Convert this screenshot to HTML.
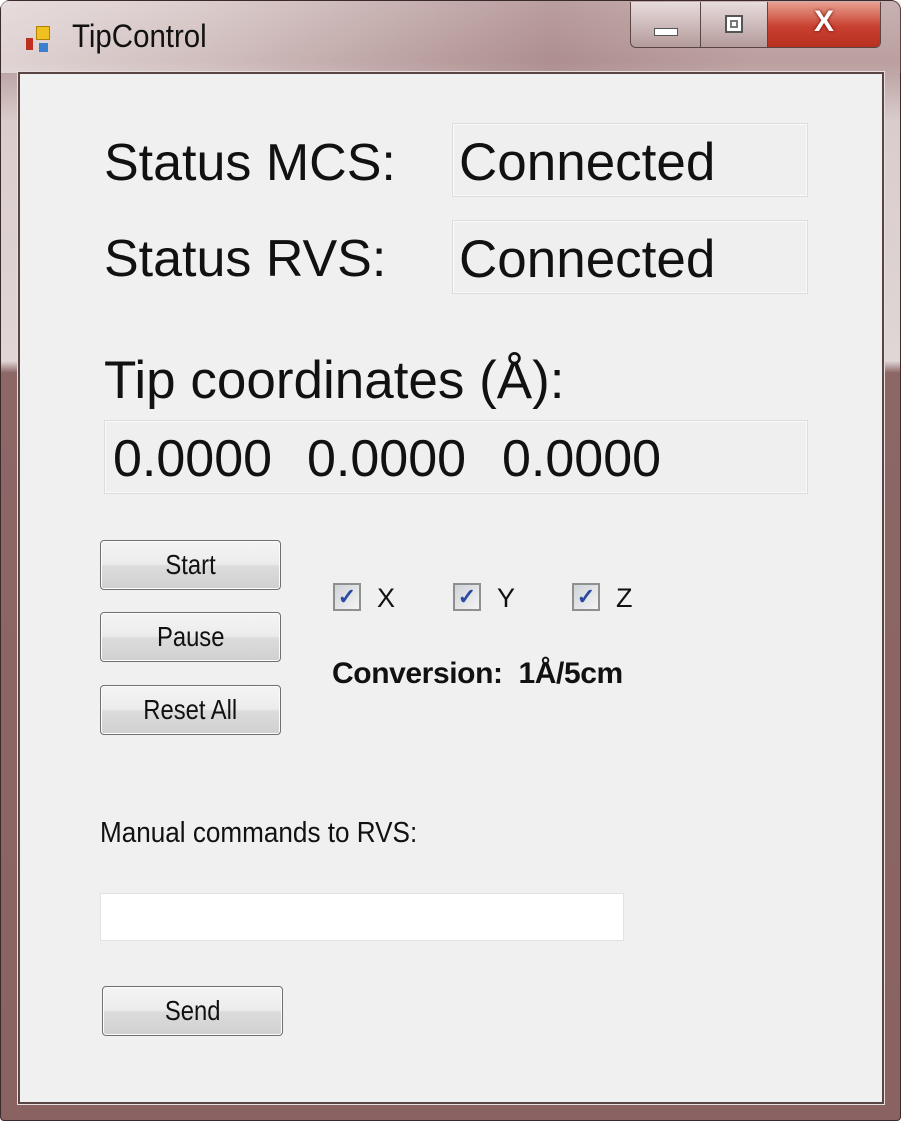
<!DOCTYPE html>
<html><head><style>
*{margin:0;padding:0;box-sizing:border-box}
body{width:901px;height:1121px;overflow:hidden;background:#fff;font-family:"Liberation Sans",sans-serif;position:relative}
.win{position:absolute;left:0;top:0;width:901px;height:1121px;border-radius:10px 10px 4px 4px;border:1px solid #3a2a2a;
background:linear-gradient(180deg,#c9b3b3 0px,#b89c9c 60px,#d9cccc 120px,#e0d6d6 360px,#8d6666 372px,#8a6262 1121px);}
.tb{position:absolute;left:0;top:0;width:901px;height:72px;background:linear-gradient(90deg,rgba(255,255,255,.55) 0,rgba(255,255,255,.35) 200px,rgba(150,110,110,.3) 550px,rgba(200,170,170,.2) 750px,rgba(200,170,170,.2) 901px)}
.client{position:absolute;left:18px;top:72px;width:866px;height:1032px;background:#f0f0f0;border:2px solid #5a4545;box-shadow:0 0 0 1px #e8dede}
.abs{position:absolute}
.big{font-size:52px;line-height:1;color:#111;white-space:nowrap}
.box{position:absolute;background:#efefef;border:1px solid #dcdcdc;box-shadow:inset 0 0 0 1px #fafafa}
.btn{position:absolute;width:181px;height:50px;border:1px solid #707070;border-radius:4px;background:linear-gradient(#f4f4f4 0,#ececec 48%,#dcdcdc 52%,#d0d0d0 100%);font-size:28px;text-align:center;line-height:48px;color:#111;box-shadow:inset 0 0 0 1px #fcfcfc}
.btn span{display:inline-block;transform:scaleX(.85)}
.cb{position:absolute;width:28px;height:28px;border:2px solid #8e8f8f;background:linear-gradient(135deg,#cfd3d8,#f4f4f4);color:#2a4aa0;font-size:22px;line-height:24px;text-align:center;font-weight:bold}
.cbl{position:absolute;font-size:27px;color:#111}
</style></head><body>
<div class="win"><div class="tb"></div></div>
<div class="abs" style="left:26px;top:38px;width:7px;height:12px;background:#c03020"></div>
<div class="abs" style="left:36px;top:26px;width:14px;height:14px;background:#f0c020;border:1px solid #b08000"></div>
<div class="abs" style="left:39px;top:43px;width:9px;height:9px;background:#3a80d0"></div>
<div class="abs" style="left:72px;top:18px;font-size:32px;color:#111;transform:scaleX(.92);transform-origin:left">TipControl</div>
<div class="abs" style="left:630px;top:2px;width:251px;height:46px;border:1px solid #5a4545;border-top:none;border-radius:0 0 6px 6px;overflow:hidden;display:flex">
<div style="width:70px;height:100%;background:linear-gradient(#e8dcdc,#b49a9a);border-right:1px solid #5a4545;position:relative"><div style="position:absolute;left:23px;top:26px;width:24px;height:8px;background:#fff;border:1px solid #555"></div></div>
<div style="width:67px;height:100%;background:linear-gradient(#e8dcdc,#b49a9a);border-right:1px solid #5a4545;position:relative"><div style="position:absolute;left:24px;top:13px;width:18px;height:18px;background:#fff;border:2px solid #555"><div style="margin:3px;width:8px;height:8px;border:2px solid #777"></div></div></div>
<div style="flex:1;height:100%;background:linear-gradient(#e8a090,#c84030 55%,#b83020);color:#fff;font-size:30px;font-weight:bold;text-align:center;line-height:40px;text-shadow:0 0 3px #600">X</div>
</div>
<div class="client"></div>

<div class="abs big" style="left:104px;top:137px">Status MCS:</div>
<div class="box" style="left:452px;top:123px;width:356px;height:74px"></div>
<div class="abs big" style="left:459px;top:136px;font-size:53px">Connected</div>
<div class="abs big" style="left:104px;top:233px">Status RVS:</div>
<div class="box" style="left:452px;top:220px;width:356px;height:74px"></div>
<div class="abs big" style="left:459px;top:233px;font-size:53px">Connected</div>
<div class="abs big" style="left:104px;top:354px;font-size:53px">Tip coordinates (Å):</div>
<div class="box" style="left:104px;top:420px;width:704px;height:74px"></div>
<div class="abs big" style="left:113px;top:433px">0.0000</div>
<div class="abs big" style="left:307px;top:433px">0.0000</div>
<div class="abs big" style="left:502px;top:433px">0.0000</div>

<div class="btn" style="left:100px;top:540px"><span>Start</span></div>
<div class="btn" style="left:100px;top:612px"><span>Pause</span></div>
<div class="btn" style="left:100px;top:685px"><span>Reset All</span></div>

<div class="cb" style="left:333px;top:583px">✓</div><div class="cbl" style="left:377px;top:583px">X</div>
<div class="cb" style="left:453px;top:583px">✓</div><div class="cbl" style="left:497px;top:583px">Y</div>
<div class="cb" style="left:572px;top:583px">✓</div><div class="cbl" style="left:616px;top:583px">Z</div>
<div class="abs" style="left:332px;top:657px;font-size:30px;font-weight:bold;color:#111;letter-spacing:-0.4px;white-space:nowrap">Conversion:&nbsp; 1Å/5cm</div>

<div class="abs" style="left:100px;top:817px;font-size:29px;color:#111;transform:scaleX(.9);transform-origin:left;white-space:nowrap">Manual commands to RVS:</div>
<div class="abs" style="left:100px;top:893px;width:524px;height:48px;background:#fff;border:1px solid #e2e2e2"></div>
<div class="btn" style="left:102px;top:986px"><span>Send</span></div>
</body></html>
